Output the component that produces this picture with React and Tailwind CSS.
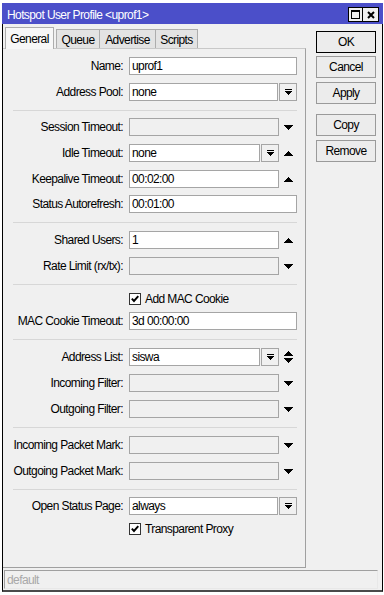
import React from "react";

const TriUp = () => (
  <svg width="9" height="5" viewBox="0 0 9 5" shapeRendering="crispEdges">
    <rect x="4" y="0" width="1" height="1" fill="#000" />
    <rect x="3" y="1" width="3" height="1" fill="#000" />
    <rect x="2" y="2" width="5" height="1" fill="#000" />
    <rect x="1" y="3" width="7" height="1" fill="#000" />
    <rect x="0" y="4" width="9" height="1" fill="#000" />
  </svg>
);

const TriDown = () => (
  <svg width="9" height="5" viewBox="0 0 9 5" shapeRendering="crispEdges">
    <rect x="0" y="0" width="9" height="1" fill="#000" />
    <rect x="1" y="1" width="7" height="1" fill="#000" />
    <rect x="2" y="2" width="5" height="1" fill="#000" />
    <rect x="3" y="3" width="3" height="1" fill="#000" />
    <rect x="4" y="4" width="1" height="1" fill="#000" />
  </svg>
);

const TriBoth = () => (
  <div className="flex flex-col items-center gap-[2px]">
    <TriUp />
    <TriDown />
  </div>
);

const DropIcon = () => (
  <svg width="7" height="6" viewBox="0 0 7 6" shapeRendering="crispEdges">
    <rect x="0" y="0" width="7" height="1" fill="#000" />
    <rect x="0" y="2" width="7" height="1" fill="#000" />
    <rect x="1" y="3" width="5" height="1" fill="#000" />
    <rect x="2" y="4" width="3" height="1" fill="#000" />
    <rect x="3" y="5" width="1" height="1" fill="#000" />
  </svg>
);

const DropBtn = () => (
  <div className="ml-[1px] w-[18px] h-[18px] border border-[#a5a5a5] bg-[#f0f0f0] flex items-center justify-center">
    <DropIcon />
  </div>
);

const Field = ({ w, value, disabled }) => (
  <div
    className={`${w} h-[18px] border border-[#a5a5a5] ${
      disabled ? "bg-[#f0f0f0]" : "bg-white"
    } pl-[2px] flex items-center whitespace-nowrap`}
  >
    {value}
  </div>
);

const TriCell = ({ children }) => (
  <div className="w-[18px] flex justify-center items-center">{children}</div>
);

const Row = ({ label, children, className = "" }) => (
  <div className={`flex items-center h-[18px] ${className}`}>
    <div className="w-[120px] text-right whitespace-nowrap">{label}</div>
    <div className="ml-[6px] flex items-center">{children}</div>
  </div>
);

const Check = () => (
  <div className="w-[12px] h-[12px] border border-[#333] bg-white flex items-center justify-center">
    <svg width="8" height="8" viewBox="0 0 8 8">
      <path d="M0.8 3.6 L3 6 L7.3 1.2" stroke="#000" strokeWidth="1.9" fill="none" />
    </svg>
  </div>
);

const CheckRow = ({ label, className = "" }) => (
  <div className={`flex items-center h-[14px] ml-[126px] ${className}`}>
    <Check />
    <span className="ml-[4px] whitespace-nowrap">{label}</span>
  </div>
);

const Btn = ({ children, def, className = "" }) => (
  <div
    className={`h-[22px] w-[60px] flex items-center justify-center border ${
      def ? "border-black" : "border-[#9a9a9a]"
    } bg-[#ececec] ${className}`}
  >
    {children}
  </div>
);

export default function App() {
  return (
    <div className="w-[384px] h-[595px] bg-white overflow-hidden font-['Liberation_Sans',Arial,sans-serif] text-[12px] leading-[14px] tracking-[-0.6px] text-black">
      <div className="ml-[2px] mt-[3px] w-[381px] flex flex-col">
        {/* Title bar */}
        <div className="h-[21px] bg-[#4b4fc9] flex items-center justify-between pl-[5px] pr-[4px]">
          <span className="text-white pt-[2px] whitespace-nowrap">Hotspot User Profile &lt;uprof1&gt;</span>
          <div className="flex mt-[2px]">
            <div className="w-[15px] h-[15px] border border-black bg-[#f0f0f0] flex items-center justify-center">
              <svg width="9" height="9" viewBox="0 0 9 9" shapeRendering="crispEdges">
                <rect x="0" y="0" width="9" height="2" fill="#000" />
                <rect x="0" y="0" width="1" height="9" fill="#000" />
                <rect x="8" y="0" width="1" height="9" fill="#000" />
                <rect x="0" y="8" width="9" height="1" fill="#000" />
              </svg>
            </div>
            <div className="w-[16px] h-[15px] border border-l-0 border-black bg-[#f0f0f0] flex items-center justify-center">
              <svg width="8" height="8" viewBox="0 0 8 8">
                <path d="M1 1 L7 7 M7 1 L1 7" stroke="#000" strokeWidth="2" />
              </svg>
            </div>
          </div>
        </div>

        {/* Body */}
        <div className="h-[568px] bg-[#f0f0f0] border-l border-r border-b-2 border-l-black border-r-black border-b-[#4a4a4a] pt-[3px] flex flex-col">
          <div className="flex">
            {/* Left: tabs + panel */}
            <div className="w-[303px] flex flex-col">
              <div className="h-[21px] flex items-end pl-[2px] relative z-10">
                <div className="w-[49px] h-[22px] -mb-px border border-b-0 border-[#adadad] bg-[#f7f7f7] flex items-center justify-center">
                  General
                </div>
                <div className="ml-[2px] w-[44px] h-[19px] border border-b-0 border-[#adadad] bg-[#e3e3e3] flex items-center justify-center pt-px">
                  Queue
                </div>
                <div className="w-[56px] h-[19px] border-t border-r border-[#adadad] bg-[#e3e3e3] flex items-center justify-center pt-px">
                  Advertise
                </div>
                <div className="w-[42px] h-[19px] border-t border-r border-[#adadad] bg-[#e3e3e3] flex items-center justify-center pt-px">
                  Scripts
                </div>
              </div>
              <div className="h-[520px] border-t border-r border-b border-t-[#c8c8c8] border-r-[#a0a0a0] border-b-[#a0a0a0] pt-[8px] flex flex-col">
                <div className="flex flex-col gap-[8px]">
                  <Row label="Name:">
                    <Field w="w-[168px]" value="uprof1" />
                  </Row>
                  <Row label="Address Pool:">
                    <Field w="w-[149px]" value="none" />
                    <DropBtn />
                  </Row>
                </div>
                <div className="ml-[10px] w-[284px] h-px bg-[#d7d7d7] mt-[9px] mb-[7px]" />
                <div className="flex flex-col gap-[8px]">
                  <Row label="Session Timeout:">
                    <Field w="w-[150px]" value="" disabled />
                    <TriCell>
                      <TriDown />
                    </TriCell>
                  </Row>
                  <Row label="Idle Timeout:">
                    <Field w="w-[131px]" value="none" />
                    <DropBtn />
                    <TriCell>
                      <TriUp />
                    </TriCell>
                  </Row>
                  <Row label="Keepalive Timeout:">
                    <Field w="w-[150px]" value="00:02:00" />
                    <TriCell>
                      <TriUp />
                    </TriCell>
                  </Row>
                  <Row label="Status Autorefresh:" className="-mt-px">
                    <Field w="w-[168px]" value="00:01:00" />
                  </Row>
                </div>
                <div className="ml-[10px] w-[284px] h-px bg-[#d7d7d7] mt-[9px] mb-[8px]" />
                <div className="flex flex-col gap-[8px]">
                  <Row label="Shared Users:">
                    <Field w="w-[150px]" value="1" />
                    <TriCell>
                      <TriUp />
                    </TriCell>
                  </Row>
                  <Row label="Rate Limit (rx/tx):">
                    <Field w="w-[150px]" value="" disabled />
                    <TriCell>
                      <TriDown />
                    </TriCell>
                  </Row>
                </div>
                <div className="ml-[10px] w-[284px] h-px bg-[#d7d7d7] mt-[9px] mb-[7px]" />
                <div className="flex flex-col">
                  <CheckRow label="Add MAC Cookie" />
                  <Row label="MAC Cookie Timeout:" className="mt-[6px]">
                    <Field w="w-[168px]" value="3d 00:00:00" />
                  </Row>
                </div>
                <div className="ml-[10px] w-[284px] h-px bg-[#d7d7d7] mt-[9px] mb-[8px]" />
                <div className="flex flex-col gap-[8px]">
                  <Row label="Address List:">
                    <Field w="w-[131px]" value="siswa" />
                    <DropBtn />
                    <TriCell>
                      <TriBoth />
                    </TriCell>
                  </Row>
                  <Row label="Incoming Filter:">
                    <Field w="w-[150px]" value="" disabled />
                    <TriCell>
                      <TriDown />
                    </TriCell>
                  </Row>
                  <Row label="Outgoing Filter:">
                    <Field w="w-[150px]" value="" disabled />
                    <TriCell>
                      <TriDown />
                    </TriCell>
                  </Row>
                </div>
                <div className="ml-[10px] w-[284px] h-px bg-[#d7d7d7] mt-[9px] mb-[8px]" />
                <div className="flex flex-col gap-[8px]">
                  <Row label="Incoming Packet Mark:">
                    <Field w="w-[150px]" value="" disabled />
                    <TriCell>
                      <TriDown />
                    </TriCell>
                  </Row>
                  <Row label="Outgoing Packet Mark:">
                    <Field w="w-[150px]" value="" disabled />
                    <TriCell>
                      <TriDown />
                    </TriCell>
                  </Row>
                </div>
                <div className="ml-[10px] w-[284px] h-px bg-[#d7d7d7] mt-[9px] mb-[7px]" />
                <div className="flex flex-col">
                  <Row label="Open Status Page:">
                    <Field w="w-[149px]" value="always" />
                    <DropBtn />
                  </Row>
                  <CheckRow label="Transparent Proxy" className="mt-[7px]" />
                </div>
              </div>
            </div>

            {/* Right: buttons */}
            <div className="ml-[10px] mt-[4px] flex flex-col">
              <Btn def>OK</Btn>
              <Btn className="mt-[3px]">Cancel</Btn>
              <Btn className="mt-[4px]">Apply</Btn>
              <Btn className="mt-[10px]">Copy</Btn>
              <Btn className="mt-[4px]">Remove</Btn>
            </div>
          </div>

          {/* Status bar */}
          <div className="mt-[2px] ml-[1px] w-[374px] h-[19px] border-t border-l border-r border-b border-t-[#a0a0a0] border-l-[#a0a0a0] border-r-[#e8e8e8] border-b-[#e8e8e8] pl-[2px] flex items-center text-[#a8a8a8]">
            default
          </div>
        </div>
      </div>
    </div>
  );
}
